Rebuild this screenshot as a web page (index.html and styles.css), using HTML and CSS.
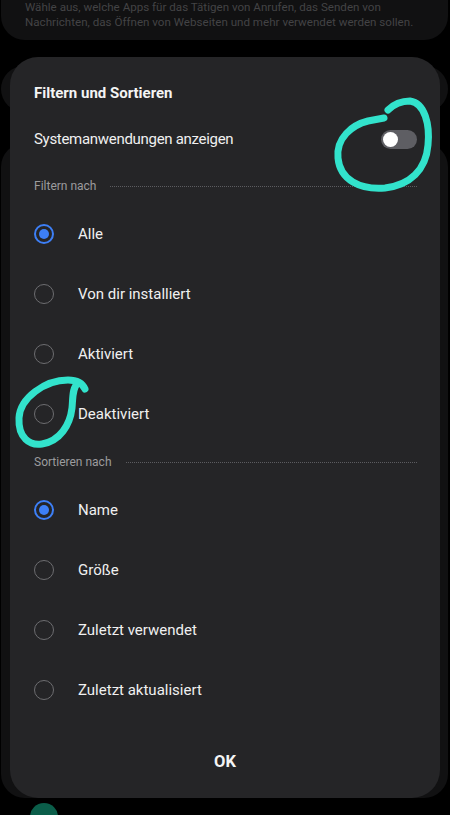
FILE: index.html
```html
<!DOCTYPE html>
<html lang="de">
<head>
<meta charset="utf-8">
<link rel="stylesheet" href="styles.css">
</head>
<body>
<div class="screen">
  <div class="bg">
    <div class="bg-card top-card">
      <p>Wähle aus, welche Apps für das Tätigen von Anrufen, das Senden von<br>Nachrichten, das Öffnen von Webseiten und mehr verwendet werden sollen.</p>
    </div>
    <div class="bg-card card2"></div>
    <div class="bg-card card3"></div>
    <div class="bg-item"><span class="bg-dot"></span></div>
  </div>

  <div class="dialog">
    <h2 class="title">Filtern und Sortieren</h2>
    <div class="switch-row">
      <span class="label">Systemanwendungen anzeigen</span>
      <span class="switch"><span class="knob"></span></span>
    </div>

    <div class="section first"><span class="section-label">Filtern nach</span><span class="dots"></span></div>
    <div class="option"><span class="radio on"></span><span class="label">Alle</span></div>
    <div class="option"><span class="radio"></span><span class="label">Von dir installiert</span></div>
    <div class="option"><span class="radio"></span><span class="label">Aktiviert</span></div>
    <div class="option"><span class="radio"></span><span class="label">Deaktiviert</span></div>

    <div class="section"><span class="section-label">Sortieren nach</span><span class="dots"></span></div>
    <div class="option"><span class="radio on"></span><span class="label">Name</span></div>
    <div class="option"><span class="radio"></span><span class="label">Größe</span></div>
    <div class="option"><span class="radio"></span><span class="label">Zuletzt verwendet</span></div>
    <div class="option"><span class="radio"></span><span class="label">Zuletzt aktualisiert</span></div>

    <div class="actions"><span class="ok">OK</span></div>
  </div>

  <svg class="marks" width="450" height="815" viewBox="0 0 450 815">
    <path d="M388,110 C395,103 402,101 410,101 C425,103 430,125 428,145 C426,170 410,185 385,188 C360,190 340,180 338,158 C336,138 352,125 368,121 L384,118" />
    <path d="M85,389 C82,382 75,380 68,380 C45,380 20,398 19,418 C18,438 30,446 42,444 C60,441 70,425 72,408 C73,398 72,388 78,383" />
  </svg>
</div>
</body>
</html>
```

FILE: styles.css
```css
* { box-sizing: border-box; }
html, body {
  margin: 0;
  padding: 0;
  background: #000;
}
body {
  font-family: Roboto, "Noto Sans", "Liberation Sans", sans-serif;
  color: #f2f2f2;
}
.screen {
  position: relative;
  width: 450px;
  height: 815px;
  overflow: hidden;
  background: #000;
}
.bg {
  display: flex;
  flex-direction: column;
}
.bg-card {
  background: #111112;
  border-radius: 24px;
  width: 447px;
  margin-left: 1px;
}
.top-card {
  height: 70px;
  margin-top: -30px;
  padding: 30px 0 0 24px;
  border-radius: 0 0 24px 24px;
}
.top-card p {
  margin: 0;
  font-size: 11.6px;
  line-height: 15px;
  color: #434345;
}
.card2 {
  height: 46px;
  margin-top: 26px;
}
.card3 {
  height: 655px;
  margin-top: 31px;
}
.bg-item {
  display: flex;
  align-items: center;
  gap: 18px;
  padding-left: 30px;
  margin-top: 5px;
}
.bg-dot {
  width: 28px;
  height: 28px;
  border-radius: 50%;
  background: #0b5e4a;
}

.dialog {
  position: absolute;
  left: 10px;
  top: 57px;
  width: 430px;
  height: 741px;
  background: #252527;
  border-radius: 28px;
  padding: 24px 23px 0 24px;
  display: flex;
  flex-direction: column;
}
.title {
  margin: 0;
  height: 25px;
  line-height: 25px;
  font-size: 15px;
  font-weight: 700;
  color: #f4f4f4;
}
.switch-row {
  margin-top: 12px;
  height: 42px;
  display: flex;
  align-items: center;
  justify-content: space-between;
}
.label {
  font-size: 15px;
  color: #f0f0f0;
}
.switch-row .label {
  letter-spacing: -0.3px;
}
.switch {
  width: 36px;
  height: 19px;
  border-radius: 10px;
  background: #5e5e63;
  display: flex;
  align-items: center;
  padding-left: 2px;
}
.knob {
  width: 15px;
  height: 15px;
  border-radius: 50%;
  background: #fff;
}
.section {
  height: 30px;
  display: flex;
  align-items: center;
  gap: 14px;
  margin-top: 3px;
  margin-bottom: 3px;
}
.section.first {
  margin-top: 11px;
}
.section-label {
  font-size: 12px;
  color: #9c9c9e;
}
.dots {
  flex: 1;
  height: 0;
  border-top: 1px dotted #5c5c60;
}
.option {
  height: 60px;
  display: flex;
  align-items: center;
  gap: 24px;
}
.radio {
  width: 20px;
  height: 20px;
  border-radius: 50%;
  border: 1.5px solid #6d6d70;
  display: flex;
  align-items: center;
  justify-content: center;
  flex: none;
}
.radio.on {
  border: 2px solid #3d7ff6;
}
.radio.on::after {
  content: "";
  width: 10px;
  height: 10px;
  border-radius: 50%;
  background: #3d7ff6;
}
.actions {
  margin-top: 21px;
  height: 40px;
  display: flex;
  align-items: center;
  justify-content: center;
}
.ok {
  font-size: 16.5px;
  font-weight: 700;
  color: #f4f4f4;
  margin-left: -1px;
}
.marks {
  position: absolute;
  left: 0;
  top: 0;
  pointer-events: none;
}
.marks path {
  fill: none;
  stroke: #32e3cc;
  stroke-width: 7;
  stroke-linecap: round;
  stroke-linejoin: round;
}
```
